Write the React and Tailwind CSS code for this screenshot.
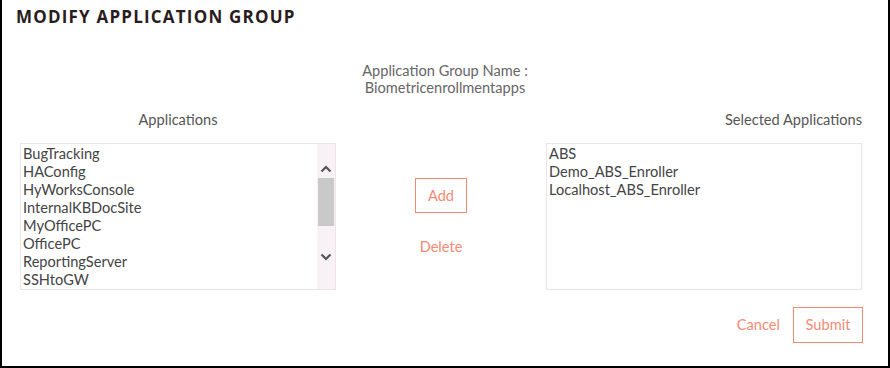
import React from 'react';

const available = [
  'BugTracking',
  'HAConfig',
  'HyWorksConsole',
  'InternalKBDocSite',
  'MyOfficePC',
  'OfficePC',
  'ReportingServer',
  'SSHtoGW',
];

const selected = ['ABS', 'Demo_ABS_Enroller', 'Localhost_ABS_Enroller'];

const font = { fontFamily: 'Lato, "Noto Sans", sans-serif' };

const App = () => {
  return (
    <div
      className="w-[890px] h-[368px] bg-white border-l-2 border-r-2 border-b-2 border-black flex flex-col"
      style={font}
    >
      {/* Header */}
      <h2
        className="pl-[14px] pt-[5px] text-[17px] leading-[24px] font-bold tracking-[1.2px] text-[#2a1c1c]"
        style={{ fontFamily: '"Open Sans", "Noto Sans", sans-serif' }}
      >
        MODIFY APPLICATION GROUP
      </h2>

      {/* Group name */}
      <div className="mt-[33px] text-center text-[14.6px] leading-[17px] text-[#666]">
        <div>Application Group Name :</div>
        <div>Biometricenrollmentapps</div>
      </div>

      <div className="grid grid-cols-[316px_210px_316px] pl-[18px] mt-[15px]">
        {/* Applications */}
        <div>
          <div className="text-center text-[14.6px] leading-[17px] text-[#555]">Applications</div>
          <div className="mt-[15px] h-[147px] border border-[#efe3e8] flex">
            <ul className="flex-1 pl-[2px] pt-[1px] text-[14.6px] leading-[18px] text-[#444]">
              {available.map((app) => (
                <li key={app}>{app}</li>
              ))}
            </ul>
            <div className="w-[18px] bg-[#f8f1f5] flex flex-col items-center">
              <svg className="mt-[21px]" width="12" height="8" viewBox="0 0 12 8">
                <path d="M1.5 6.5 L6 2 L10.5 6.5" fill="none" stroke="#555" strokeWidth="2.2" />
              </svg>
              <div className="mt-[5px] w-[16px] h-[48px] bg-[#c9c9c9]" />
              <svg className="mt-[27px]" width="12" height="8" viewBox="0 0 12 8">
                <path d="M1.5 1.5 L6 6 L10.5 1.5" fill="none" stroke="#555" strokeWidth="2.2" />
              </svg>
            </div>
          </div>
        </div>

        {/* Actions */}
        <div className="flex flex-col items-center pt-[67px]">
          <button className="w-[52px] h-[35px] border border-[#f58a74] text-[#f58a74] text-[14.6px]">
            Add
          </button>
          <button className="mt-[25px] text-[#f58a74] text-[14.6px] leading-[17px]">Delete</button>
        </div>

        {/* Selected */}
        <div>
          <div className="text-right text-[14.6px] leading-[17px] text-[#555]">Selected Applications</div>
          <div className="mt-[15px] h-[147px] border border-[#efe3e8]">
            <ul className="pl-[2px] pt-[1px] text-[14.6px] leading-[18px] text-[#444]">
              {selected.map((app) => (
                <li key={app}>{app}</li>
              ))}
            </ul>
          </div>
        </div>
      </div>

      {/* Footer */}
      <div className="flex justify-end items-center gap-[13px] pr-[25px] mt-[17px]">
        <button className="text-[#f58a74] text-[14.6px]">Cancel</button>
        <button className="w-[70px] h-[36px] border border-[#f58a74] text-[#f58a74] text-[14.6px]">
          Submit
        </button>
      </div>
    </div>
  );
};

export default App;
